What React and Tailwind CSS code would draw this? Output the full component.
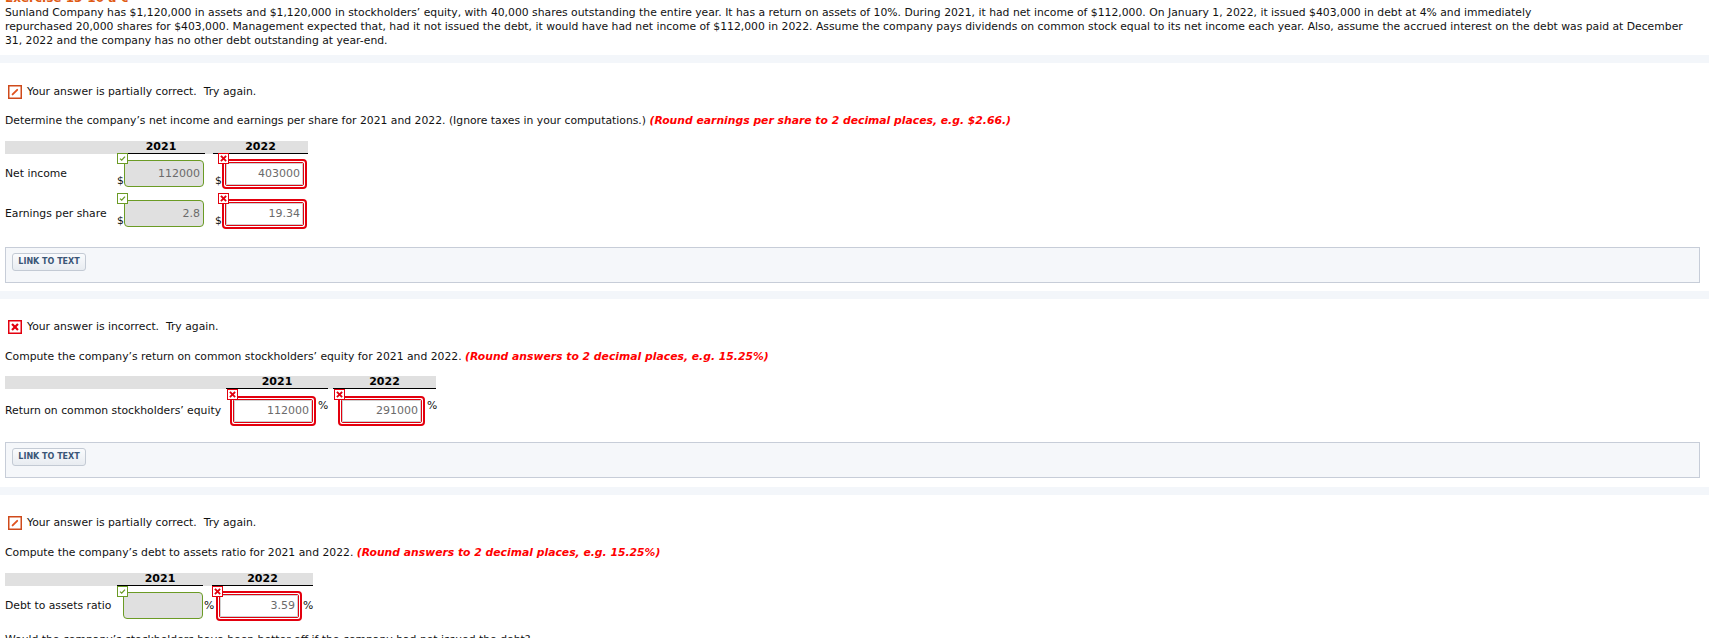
import React from "react";

function Badge({ ok, pos }) {
  return (
    <svg className={`absolute z-10 ${pos}`} width="11" height="11" viewBox="0 0 11 11">
      <rect x="0.5" y="0.5" width="10" height="10" fill="#fff" stroke={ok ? "#6b9b25" : "#e3000e"} strokeWidth="1" />
      {ok ? (
        <path d="M3 5.6 L4.7 7.2 L8 3.6" fill="none" stroke="#6b9b25" strokeWidth="1.3" />
      ) : (
        <g stroke="#e3000e" strokeWidth="1.8" strokeLinecap="square">
          <line x1="3.5" y1="3.5" x2="7.5" y2="7.5" />
          <line x1="7.5" y1="3.5" x2="3.5" y2="7.5" />
        </g>
      )}
    </svg>
  );
}

function PartialIcon() {
  return (
    <svg width="14" height="14" viewBox="0 0 14 14" className="ml-[3px] shrink-0">
      <rect x="0.75" y="0.75" width="12.5" height="12.5" fill="#fff" stroke="#cf4a1b" strokeWidth="1.5" />
      <line x1="4.6" y1="9.4" x2="9.2" y2="4.8" stroke="#e0531f" strokeWidth="1.9" strokeLinecap="round" />
    </svg>
  );
}

function WrongIcon() {
  return (
    <svg width="14" height="14" viewBox="0 0 14 14" className="ml-[3px] shrink-0">
      <rect x="0.75" y="0.75" width="12.5" height="12.5" fill="#fff" stroke="#e3000e" strokeWidth="1.5" />
      <g stroke="#e3000e" strokeWidth="2.2" strokeLinecap="square">
        <line x1="4.8" y1="4.8" x2="9.2" y2="9.2" />
        <line x1="9.2" y1="4.8" x2="4.8" y2="9.2" />
      </g>
    </svg>
  );
}

function GreenBox({ w, value }) {
  return (
    <div className={`${w} h-[27px] shrink-0 rounded-[4px] border-[1.5px] border-[#6b9b25] bg-[#e0e0e0] flex items-center justify-end pr-[3px] text-[11px] text-[#6b6b6b]`}>
      {value}
    </div>
  );
}

function RedBox({ w, value, extra }) {
  return (
    <div className={`${w} ${extra || ""} h-[30px] shrink-0 rounded-[4px] border-2 border-[#e3000e] bg-white p-px`}>
      <div className="h-full rounded-[2px] border border-[#e3000e]">
        <div className="h-full border border-[#d0d0d0] bg-white flex items-center justify-end pr-[2px] text-[11px] text-[#6b6b6b]">
          {value}
        </div>
      </div>
    </div>
  );
}

function LinkBox({ mt }) {
  return (
    <div className={`${mt} h-[36px] border border-[#c7cdd8] bg-[#f5f7fa] pl-[6px] pt-[5px]`}>
      <div className="w-[74px] h-[18px] rounded-[3px] border border-[#c3cad4] bg-gradient-to-b from-[#fafbfd] to-[#e8ecf1] flex items-center justify-center text-[8px] leading-[10px] font-bold text-[#3a5677]">
        LINK TO TEXT
      </div>
    </div>
  );
}

function Status({ partial }) {
  return (
    <div className="flex items-center h-[14px]">
      {partial ? <PartialIcon /> : <WrongIcon />}
      <span className="ml-[5px] whitespace-pre">
        {partial ? "Your answer is partially correct.  Try again." : "Your answer is incorrect.  Try again."}
      </span>
    </div>
  );
}

export default function App() {
  return (
    <div className="h-[638px] w-[1709px] overflow-hidden bg-[#f3f6fa] flex flex-col gap-[8px] font-['DejaVu_Sans',Verdana,sans-serif] text-[10.8px] leading-[14px] text-[#111]">
      {/* Intro */}
      <div className="bg-white pl-[5px] pr-[5px] pb-[7px] shrink-0">
        <div className="-mt-[9px] h-[14px] text-[12px] font-bold text-[#df5a14]">Exercise 13-10 a-c</div>
        <div className="mt-[1px]">
          <div className="whitespace-nowrap">
            Sunland Company has $1,120,000 in assets and $1,120,000 in stockholders’ equity, with 40,000 shares outstanding the entire year. It has a return on assets of 10%. During 2021, it had net income of $112,000. On January 1, 2022, it issued $403,000 in debt at 4% and immediately
          </div>
          <div className="whitespace-nowrap">
            repurchased 20,000 shares for $403,000. Management expected that, had it not issued the debt, it would have had net income of $112,000 in 2022. Assume the company pays dividends on common stock equal to its net income each year. Also, assume the accrued interest on the debt was paid at December
          </div>
          <div className="whitespace-nowrap">31, 2022 and the company has no other debt outstanding at year-end.</div>
        </div>
      </div>

      {/* Part a */}
      <div className="bg-white pl-[5px] pr-[9px] pt-[22px] pb-[8px] shrink-0">
        <Status partial />
        <div className="mt-[15px]">
          Determine the company’s net income and earnings per share for 2021 and 2022. (Ignore taxes in your computations.){" "}
          <span className="font-bold italic text-[#ff0000]">(Round earnings per share to 2 decimal places, e.g. $2.66.)</span>
        </div>
        <div className="mt-[13px] w-[303px] h-[13px] bg-[#e0e0e0] flex font-bold text-[11px] leading-[12px] text-black">
          <div className="w-[112px] shrink-0" />
          <div className="w-[88px] shrink-0 border-b border-black text-center">2021</div>
          <div className="w-[8px] shrink-0" />
          <div className="w-[95px] shrink-0 border-b border-black text-center">2022</div>
        </div>

        <div className="mt-[6px] flex items-center h-[27px]">
          <div className="w-[112px] shrink-0">Net income</div>
          <div className="w-[88px] shrink-0 relative flex items-center h-full">
            <span className="self-end leading-[12px] w-[7px] shrink-0">$</span>
            <GreenBox w="w-[80px]" value="112000" />
            <Badge ok pos="left-0 -top-[7px]" />
          </div>
          <div className="w-[8px] shrink-0" />
          <div className="w-[95px] shrink-0 relative flex items-center h-full">
            <span className="self-end leading-[12px] ml-[2px] w-[7px] shrink-0">$</span>
            <RedBox w="w-[85px]" value="403000" />
            <Badge pos="left-[5px] -top-[7px]" />
          </div>
        </div>

        <div className="mt-[13px] flex items-center h-[27px]">
          <div className="w-[112px] shrink-0">Earnings per share</div>
          <div className="w-[88px] shrink-0 relative flex items-center h-full">
            <span className="self-end leading-[12px] w-[7px] shrink-0">$</span>
            <GreenBox w="w-[80px]" value="2.8" />
            <Badge ok pos="left-0 -top-[7px]" />
          </div>
          <div className="w-[8px] shrink-0" />
          <div className="w-[95px] shrink-0 relative flex items-center h-full">
            <span className="self-end leading-[12px] ml-[2px] w-[7px] shrink-0">$</span>
            <RedBox w="w-[85px]" value="19.34" />
            <Badge pos="left-[5px] -top-[7px]" />
          </div>
        </div>

        <LinkBox mt="mt-[20px]" />
      </div>

      {/* Part b */}
      <div className="bg-white pl-[5px] pr-[9px] pt-[21px] pb-[9px] shrink-0">
        <Status />
        <div className="mt-[16px]">
          Compute the company’s return on common stockholders’ equity for 2021 and 2022.{" "}
          <span className="font-bold italic text-[#ff0000]">(Round answers to 2 decimal places, e.g. 15.25%)</span>
        </div>
        <div className="mt-[12px] w-[431px] h-[13px] bg-[#e0e0e0] flex font-bold text-[11px] leading-[12px] text-black">
          <div className="w-[221px] shrink-0" />
          <div className="w-[102px] shrink-0 border-b border-black text-center">2021</div>
          <div className="w-[5px] shrink-0" />
          <div className="w-[103px] shrink-0 border-b border-black text-center">2022</div>
        </div>

        <div className="mt-[7px] flex items-center h-[30px]">
          <div className="w-[221px] shrink-0">Return on common stockholders’ equity</div>
          <div className="w-[102px] shrink-0 relative flex items-center h-full">
            <RedBox w="w-[86px]" extra="ml-[4px]" value="112000" />
            <span className="self-start mt-[3px] ml-[2px]">%</span>
            <Badge pos="left-[1px] -top-[7px]" />
          </div>
          <div className="w-[5px] shrink-0" />
          <div className="w-[103px] shrink-0 relative flex items-center h-full">
            <RedBox w="w-[87px]" extra="ml-[5px]" value="291000" />
            <span className="self-start mt-[3px] ml-[2px]">%</span>
            <Badge pos="left-[1px] -top-[7px]" />
          </div>
        </div>

        <LinkBox mt="mt-[16px]" />
      </div>

      {/* Part c */}
      <div className="bg-white pl-[5px] pr-[9px] pt-[21px] grow">
        <Status partial />
        <div className="mt-[16px]">
          Compute the company’s debt to assets ratio for 2021 and 2022.{" "}
          <span className="font-bold italic text-[#ff0000]">(Round answers to 2 decimal places, e.g. 15.25%)</span>
        </div>
        <div className="mt-[13px] w-[308px] h-[13px] bg-[#e0e0e0] flex font-bold text-[11px] leading-[12px] text-black">
          <div className="w-[112px] shrink-0" />
          <div className="w-[86px] shrink-0 border-b border-black text-center">2021</div>
          <div className="w-[9px] shrink-0" />
          <div className="w-[101px] shrink-0 border-b border-black text-center">2022</div>
        </div>

        <div className="mt-[6px] flex items-center h-[27px]">
          <div className="w-[112px] shrink-0">Debt to assets ratio</div>
          <div className="w-[86px] shrink-0 relative flex items-center h-full">
            <div className="ml-[6px]">
              <GreenBox w="w-[80px]" value="" />
            </div>
            <span className="ml-[1px] shrink-0">%</span>
            <Badge ok pos="left-0 -top-[6px]" />
          </div>
          <div className="w-[9px] shrink-0" />
          <div className="w-[101px] shrink-0 relative flex items-center h-full">
            <RedBox w="w-[86px]" extra="ml-[4px]" value="3.59" />
            <span className="ml-[1px] shrink-0">%</span>
            <Badge pos="left-0 -top-[6px]" />
          </div>
        </div>

        <div className="mt-[14px] whitespace-nowrap">
          Would the company’s stockholders have been better off if the company had not issued the debt?
        </div>
      </div>
    </div>
  );
}
